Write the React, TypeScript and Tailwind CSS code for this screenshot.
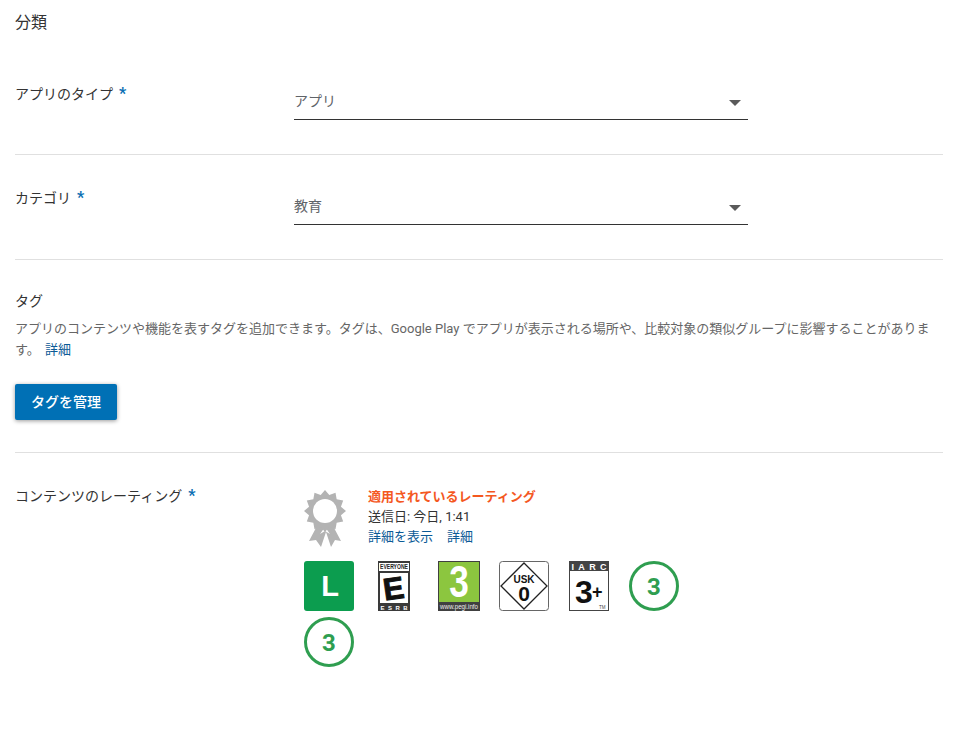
function Star() {
  return <span className="ml-[6px] text-[16px] font-bold leading-[16px] text-[#0b6fb3]">*</span>;
}

function SelectField({ value }: { value: string }) {
  return (
    <div className="ml-[147px] flex h-[39px] w-[454px] items-center justify-between border-b border-[#333333] pr-[7px] pt-[3px]">
      <span className="text-[14px] text-[#5f6368]">{value}</span>
      <svg width="12" height="6" viewBox="0 0 12 6" className="mt-[2px]">
        <path d="M0 0H12L6 6Z" fill="#5a5a5a" />
      </svg>
    </div>
  );
}

function Medal() {
  const pts: string[] = [];
  const n = 12;
  for (let i = 0; i < n * 2; i++) {
    const r = i % 2 === 0 ? 21 : 16.5;
    const a = (Math.PI * i) / n;
    pts.push(`${21 + r * Math.sin(a)},${21 - r * Math.cos(a)}`);
  }
  return (
    <svg width="42" height="60" viewBox="0 0 42 60" className="shrink-0">
      <path d="M13 36L5 51L12 50L17 57L22 42L27 57L31 50L37 51L29 36Z" fill="#b3b3b3" />
      <path d="M21 37L16 44L21 41L26 44Z" fill="#ffffff" />
      <polygon points={pts.join(' ')} fill="#b3b3b3" />
      <circle cx="21" cy="21" r="12" fill="#ffffff" />
    </svg>
  );
}

function LBadge() {
  return (
    <svg width="50" height="50" viewBox="0 0 50 50">
      <rect width="50" height="50" rx="3" fill="#0c9d4f" />
      <text x="26" y="35" textAnchor="middle" fontSize="29" fontWeight="700" fill="#fff" fontFamily="Liberation Sans, sans-serif">L</text>
    </svg>
  );
}

function Esrb() {
  return (
    <svg width="50" height="50" viewBox="0 0 50 50">
      <rect x="9" y="0" width="32" height="50" fill="#3a3a3a" />
      <rect x="10" y="2" width="30" height="8" fill="#fff" />
      <text x="25" y="8.2" textAnchor="middle" fontSize="6.5" fontWeight="700" textLength="28" lengthAdjust="spacingAndGlyphs" fill="#222" fontFamily="Liberation Sans, sans-serif">EVERYONE</text>
      <rect x="11" y="12" width="28" height="30" fill="#fff" />
      <g transform="rotate(-8 25 27)">
        <text x="24.5" y="38" textAnchor="middle" fontSize="31" fontWeight="700" fill="#111" stroke="#111" strokeWidth="1" fontFamily="Liberation Sans, sans-serif">E</text>
      </g>
      <text x="25" y="49" textAnchor="middle" fontSize="6" fontWeight="700" textLength="27" lengthAdjust="spacing" fill="#fff" fontFamily="Liberation Sans, sans-serif">ESRB</text>
    </svg>
  );
}

function Pegi() {
  return (
    <svg width="50" height="50" viewBox="0 0 50 50">
      <rect x="4" y="0" width="42" height="50" fill="#404040" />
      <rect x="5" y="1" width="40" height="40" fill="#8cc63f" />
      <g transform="translate(25 36) scale(0.8 1)">
        <text x="0" y="0" textAnchor="middle" fontSize="44" fontWeight="700" fill="#fff" fontFamily="Liberation Sans, sans-serif">3</text>
      </g>
      <text x="25" y="47.5" textAnchor="middle" fontSize="6.5" textLength="38" lengthAdjust="spacingAndGlyphs" fill="#eee" fontFamily="Liberation Sans, sans-serif">www.pegi.info</text>
    </svg>
  );
}

function Usk() {
  return (
    <svg width="50" height="50" viewBox="0 0 50 50">
      <rect x="0.5" y="0.5" width="49" height="49" rx="3" fill="#fff" stroke="#666" />
      <path d="M25 2L48 25L25 48L2 25Z" fill="#fff" stroke="#222" strokeWidth="1.3" />
      <text x="25" y="22" textAnchor="middle" fontSize="10" fontWeight="700" fill="#111" fontFamily="Liberation Sans, sans-serif">USK</text>
      <text x="25" y="39.5" textAnchor="middle" fontSize="21" fontWeight="700" fill="#111" fontFamily="Liberation Sans, sans-serif">0</text>
    </svg>
  );
}

function Iarc() {
  return (
    <svg width="50" height="50" viewBox="0 0 50 50">
      <rect x="5.5" y="0.5" width="39" height="49" fill="#fff" stroke="#444" />
      <rect x="5" y="0" width="40" height="10" fill="#444" />
      <text x="25" y="8.5" textAnchor="middle" fontSize="9" fontWeight="700" textLength="35" lengthAdjust="spacing" fill="#fff" fontFamily="Liberation Sans, sans-serif">IARC</text>
      <text x="11" y="42" fontSize="32" fontWeight="700" fill="#111" fontFamily="Liberation Sans, sans-serif">3</text>
      <text x="28" y="37" fontSize="18" fontWeight="700" fill="#111" fontFamily="Liberation Sans, sans-serif">+</text>
      <text x="35" y="47.5" fontSize="4.5" fill="#444" fontFamily="Liberation Sans, sans-serif">TM</text>
    </svg>
  );
}

function Circle3() {
  return (
    <svg width="50" height="50" viewBox="0 0 50 50">
      <circle cx="25" cy="25" r="23.5" fill="#fff" stroke="#2f9e50" strokeWidth="3" />
      <text x="25" y="34" textAnchor="middle" fontSize="24" fontWeight="700" fill="#2f9e50" fontFamily="Roboto, sans-serif">3</text>
    </svg>
  );
}

export default function App() {
  return (
    <div
      className="relative h-[748px] w-[958px] overflow-hidden bg-white pl-[15px] pr-[15px] text-[#333333]"
      style={{ fontFamily: 'Roboto, "Noto Sans CJK JP", sans-serif' }}
    >
      <h2 className="h-[46px] pt-[13px] text-[16px] leading-[20px] text-[#333]">分類</h2>

      <section className="flex h-[109px] items-start border-b border-[#e0e0e0] pt-[38px]">
        <div className="w-[132px] shrink-0 text-[14px] leading-[20px]">
          アプリのタイプ<Star />
        </div>
        <div className="-mt-[3px]"><SelectField value="アプリ" /></div>
      </section>

      <section className="flex h-[105px] items-start border-b border-[#e0e0e0] pt-[33px]">
        <div className="w-[132px] shrink-0 text-[14px] leading-[20px]">
          カテゴリ<Star />
        </div>
        <div className="-mt-[2px]"><SelectField value="教育" /></div>
      </section>

      <section className="h-[193px] border-b border-[#e0e0e0] pt-[31px]">
        <div className="text-[14px] leading-[20px]">タグ</div>
        <p className="mt-[7px] text-[13px] leading-[21px] text-[#666666]">
          アプリのコンテンツや機能を表すタグを追加できます。タグは、Google Play でアプリが表示される場所や、比較対象の類似グループに影響することがあります。 <a className="ml-[2px] text-[#0b5a96]">詳細</a>
        </p>
        <button className="mt-[24px] h-[36px] w-[102px] rounded-[2px] bg-[#0070b5] text-[14px] font-medium text-white shadow-[0_1px_4px_rgba(0,0,0,0.4)]">
          タグを管理
        </button>
      </section>

      <section className="flex items-start pt-[33px]">
        <div className="w-[289px] shrink-0 text-[14px] leading-[20px]">
          コンテンツのレーティング<Star />
        </div>
        <div className="w-[400px]">
          <div className="flex gap-[22px]">
            <div className="pt-[4px]"><Medal /></div>
            <div className="pt-[1px] text-[13px] leading-[20px]">
              <div className="font-bold text-[#f4581f]">適用されているレーティング</div>
              <div className="text-[#333]">送信日: 今日, 1:41</div>
              <div className="text-[#0b5a96]">詳細を表示<span className="ml-[14px]">詳細</span></div>
            </div>
          </div>
          <div className="mt-[11px] flex flex-wrap gap-x-[15px] gap-y-[6px]">
            <LBadge /><Esrb /><Pegi /><Usk /><Iarc /><Circle3 /><Circle3 />
          </div>
        </div>
      </section>
    </div>
  );
}
